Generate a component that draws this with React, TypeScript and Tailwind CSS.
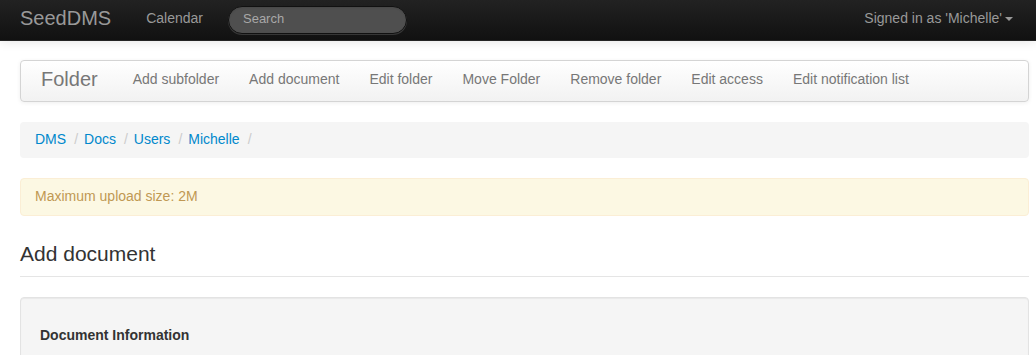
import React from "react";

const font = { fontFamily: '"Liberation Sans", Arial, Helvetica, sans-serif' };

export default function App() {
  const folderItems = [
    "Add subfolder",
    "Add document",
    "Edit folder",
    "Move Folder",
    "Remove folder",
    "Edit access",
    "Edit notification list",
  ];
  const crumbs = ["DMS", "Docs", "Users", "Michelle"];
  return (
    <div className="min-h-[355px] bg-white text-[14px] leading-5 text-[#333]" style={font}>
      {/* Top navbar */}
      <div className="h-[41px] border-b border-[#252525] bg-gradient-to-b from-[#222222] to-[#111111] shadow-[0_1px_10px_rgba(0,0,0,0.1)]">
        <div className="flex h-10 items-center pl-5 pr-[8px]">
          <span className="pb-[12px] pr-5 pt-[8px] text-[20px] leading-5 text-[#999]">SeedDMS</span>
          <span className="px-[15px] pb-[12px] pt-[8px] text-[14px] leading-5 text-[#999]">Calendar</span>
          <div className="ml-[10px] flex h-[28px] w-[179px] items-center rounded-full border border-[#111] bg-[#4f4f4f] px-[14px] pb-[2px] text-[13px] text-[#a8a8a8] shadow-[inset_0_1px_2px_rgba(0,0,0,0.1),0_1px_0_rgba(255,255,255,0.15)]">
            Search
          </div>
          <div className="ml-auto flex items-center px-[15px] pb-[12px] pt-[8px] text-[14px] leading-5 text-[#999]">
            Signed in as 'Michelle'
            <span className="ml-[3px] mt-[1px] inline-block h-0 w-0 border-x-[4px] border-t-[4px] border-x-transparent border-t-[#999]" />
          </div>
        </div>
      </div>

      <div className="pl-5 pr-[7px] pt-[19px]">
        {/* Folder navbar */}
        <div className="flex h-[42px] items-center rounded-[4px] border border-[#d4d4d4] bg-gradient-to-b from-white to-[#f2f2f2] shadow-[0_1px_4px_rgba(0,0,0,0.065)]">
          <span className="pb-[12px] pl-5 pr-5 pt-[8px] text-[20px] leading-5 text-[#777]">Folder</span>
          {folderItems.map((t) => (
            <span key={t} className="px-[15px] pb-[12px] pt-[8px] text-[14px] leading-5 text-[#777]">
              {t}
            </span>
          ))}
        </div>

        {/* Breadcrumb */}
        <div className="mt-5 flex h-9 items-center rounded-[4px] bg-[#f5f5f5] px-[15px] pb-[2px]">
          {crumbs.map((c) => (
            <React.Fragment key={c}>
              <span className="text-[#0088cc]">{c}</span>
              <span className="pl-[8px] pr-[6px] text-[#ccc]">/</span>
            </React.Fragment>
          ))}
        </div>

        {/* Alert */}
        <div className="mt-5 flex h-[38px] items-center rounded-[4px] border border-[#fbeed5] bg-[#fcf8e3] pb-[2px] pl-[14px] text-[#c09853]">
          Maximum upload size: 2M
        </div>

        {/* Legend heading */}
        <div className="mt-5 h-[41px] border-b border-[#e5e5e5] text-[21px] leading-9 text-[#333]">
          Add document
        </div>

        {/* Well */}
        <div className="mt-5 h-[80px] rounded-[4px] border border-[#e3e3e3] bg-[#f5f5f5] px-[19px] pt-[19px] shadow-[inset_0_1px_1px_rgba(0,0,0,0.05)]">
          <div className="text-[14px] font-bold leading-9 text-[#333]">Document Information</div>
        </div>
      </div>
    </div>
  );
}
